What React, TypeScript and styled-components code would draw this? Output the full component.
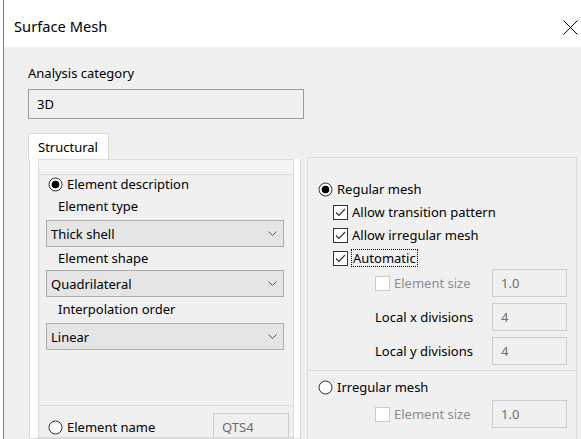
import React from 'react';
import styled, { createGlobalStyle } from 'styled-components';

const GlobalStyle = createGlobalStyle`
  html, body {
    margin: 0;
    padding: 0;
    background: #ffffff;
  }
  body {
    font-family: 'Noto Sans', 'Open Sans', sans-serif;
    font-size: 13px;
    color: #000;
  }
`;

const Window = styled.div`
  width: 577px;
  height: 439px;
  margin-left: 3px;
  border-left: 1px solid #7d7d7d;
  background: #f0f0f0;
  display: flex;
  flex-direction: column;
  overflow: hidden;
`;

const TitleBar = styled.div`
  height: 47px;
  flex-shrink: 0;
  background: #ffffff;
  display: flex;
  align-items: flex-start;
  justify-content: space-between;
  padding: 0 3px 0 10px;
`;

const Title = styled.span`
  font-size: 14.7px;
  line-height: 20px;
  margin-top: 16px;
`;

const CloseButton = styled.button`
  width: 15px;
  height: 15px;
  padding: 0;
  margin-top: 20px;
  border: none;
  background: none;
  display: flex;
`;

const Body = styled.div`
  flex: 1;
  min-height: 0;
  padding: 18px 0 0 24px;
  display: flex;
  flex-direction: column;
`;

const Caption = styled.div`
  line-height: 16px;
`;

const ReadonlyBox = styled.div`
  width: 276px;
  height: 30px;
  box-sizing: border-box;
  margin-top: 8px;
  border: 1px solid #9a9a9a;
  padding-left: 8px;
  display: flex;
  align-items: center;
`;

const Panes = styled.div`
  flex: 1;
  min-height: 0;
  margin-top: 14px;
  display: flex;
  align-items: flex-start;
`;

const TabControl = styled.div`
  width: 273px;
  height: 100%;
  display: flex;
  flex-direction: column;
`;

const TabHeader = styled.div`
  width: 81px;
  height: 26px;
  flex-shrink: 0;
  box-sizing: border-box;
  background: #ffffff;
  border: 1px solid #d9d9d9;
  border-bottom: none;
  padding: 0 0 0 9px;
  display: flex;
  align-items: center;
`;

const TabPage = styled.div`
  flex: 1;
  min-height: 0;
  margin-left: 1px;
  background: #ffffff;
  border: 1px solid #dadada;
  border-top: none;
  padding: 0 6px 0 8px;
  display: flex;
`;

const InnerPanel = styled.div`
  flex: 1;
  background: #f0f0f0;
  border: 1px solid #dcdcdc;
  display: flex;
  flex-direction: column;
  overflow: hidden;
`;

const PanelTop = styled.div`
  height: 14px;
  flex-shrink: 0;
  background: #f3f3f3;
  border-bottom: 1px solid #dcdcdc;
`;

const DescGroup = styled.div`
  height: 230px;
  flex-shrink: 0;
  border-bottom: 1px solid #dcdcdc;
  padding: 0 0 0 9px;
  display: flex;
  flex-direction: column;
`;

const OptionRow = styled.label<{ $indent?: number; $top?: number; $disabled?: boolean }>`
  display: flex;
  align-items: center;
  gap: 4px;
  height: 16px;
  line-height: 16px;
  flex-shrink: 0;
  margin-left: ${p => p.$indent ?? 0}px;
  margin-top: ${p => p.$top ?? 0}px;
  color: ${p => (p.$disabled ? '#8d8d8d' : '#000')};
  white-space: nowrap;
`;

const FocusText = styled.span`
  outline: 1px dotted #000;
  outline-offset: 0;
  padding: 0 1px;
`;

const SubLabel = styled.div<{ $top: number; $bottom: number }>`
  line-height: 16px;
  margin: ${p => p.$top}px 0 ${p => p.$bottom}px 10px;
`;

const Combo = styled.div`
  width: 238px;
  height: 27px;
  flex-shrink: 0;
  box-sizing: border-box;
  margin-left: -2px;
  background: #e5e5e5;
  border: 1px solid #adadad;
  padding: 0 6px 0 4px;
  display: flex;
  align-items: center;
  justify-content: space-between;
`;

const NameRow = styled.div`
  flex-shrink: 0;
  display: flex;
  align-items: flex-start;
  justify-content: space-between;
  padding: 7px 4px 0 9px;
`;

const ValueBox = styled.div<{ $width: number }>`
  width: ${p => p.$width}px;
  height: 28px;
  flex-shrink: 0;
  box-sizing: border-box;
  border: 1px solid #cccccc;
  color: #6d6d6d;
  padding-left: 8px;
  display: flex;
  align-items: center;
`;

const MeshGroup = styled.div`
  width: 270px;
  height: 300px;
  box-sizing: border-box;
  margin: 24px 0 0 6px;
  border: 1px solid #dcdcdc;
  display: flex;
  flex-direction: column;
`;

const RegularSection = styled.div`
  padding: 23px 0 5px;
  border-bottom: 1px solid #dcdcdc;
  display: flex;
  flex-direction: column;
`;

const IrregularSection = styled.div`
  padding: 8px 0 0;
  display: flex;
  flex-direction: column;
`;

const ValueRow = styled.div<{ $top: number }>`
  display: grid;
  grid-template-columns: 117px 75px;
  align-items: center;
  margin: ${p => p.$top}px 0 0 67px;
`;

const Radio: React.FC<{ checked?: boolean }> = ({ checked }) => (
  <svg width="15" height="15" viewBox="0 0 15 15">
    <circle cx="7.5" cy="7.5" r="6.5" fill="#fff" stroke="#333" strokeWidth="1" />
    {checked && <circle cx="7.5" cy="7.5" r="3.8" fill="#000" />}
  </svg>
);

const Check: React.FC<{ checked?: boolean; disabled?: boolean }> = ({ checked, disabled }) => (
  <svg width="15" height="15" viewBox="0 0 15 15">
    <rect x="0.5" y="0.5" width="14" height="14" fill="#fff" stroke={disabled ? '#cccccc' : '#333'} />
    {checked && (
      <polyline points="3,7.5 6,10.5 12,4" fill="none" stroke="#333" strokeWidth="1.2" />
    )}
  </svg>
);

const Chevron = () => (
  <svg width="9" height="5" viewBox="0 0 9 5">
    <polyline points="0.5,0.5 4.5,4.5 8.5,0.5" fill="none" stroke="#555" strokeWidth="1" />
  </svg>
);

const App: React.FC = () => {
  const fields = [
    { label: 'Element type', value: 'Thick shell', top: 6, bottom: 6 },
    { label: 'Element shape', value: 'Quadrilateral', top: 3, bottom: 4 },
    { label: 'Interpolation order', value: 'Linear', top: 4, bottom: 6 },
  ];

  return (
    <>
      <GlobalStyle />
      <Window>
        <TitleBar>
          <Title>Surface Mesh</Title>
          <CloseButton aria-label="Close">
            <svg width="15" height="15" viewBox="0 0 15 15">
              <path d="M0.5 0.5 L14.5 14.5 M14.5 0.5 L0.5 14.5" stroke="#000" strokeWidth="1" />
            </svg>
          </CloseButton>
        </TitleBar>

        <Body>
          <Caption>Analysis category</Caption>
          <ReadonlyBox>3D</ReadonlyBox>

          <Panes>
            <TabControl>
              <TabHeader>Structural</TabHeader>
              <TabPage>
                <InnerPanel>
                  <PanelTop />
                  <DescGroup>
                    <OptionRow $top={1}>
                      <Radio checked />
                      Element description
                    </OptionRow>
                    {fields.map(f => (
                      <React.Fragment key={f.label}>
                        <SubLabel $top={f.top} $bottom={f.bottom}>{f.label}</SubLabel>
                        <Combo>
                          {f.value}
                          <Chevron />
                        </Combo>
                      </React.Fragment>
                    ))}
                  </DescGroup>
                  <NameRow>
                    <OptionRow $top={6}>
                      <Radio />
                      Element name
                    </OptionRow>
                    <ValueBox $width={76}>QTS4</ValueBox>
                  </NameRow>
                </InnerPanel>
              </TabPage>
            </TabControl>

            <MeshGroup>
              <RegularSection>
                <OptionRow $indent={10}>
                  <Radio checked />
                  Regular mesh
                </OptionRow>
                <OptionRow $indent={25} $top={7}>
                  <Check checked />
                  Allow transition pattern
                </OptionRow>
                <OptionRow $indent={25} $top={7}>
                  <Check checked />
                  Allow irregular mesh
                </OptionRow>
                <OptionRow $indent={25} $top={7}>
                  <Check checked />
                  <FocusText>Automatic</FocusText>
                </OptionRow>
                <ValueRow $top={3}>
                  <OptionRow $disabled>
                    <Check disabled />
                    Element size
                  </OptionRow>
                  <ValueBox $width={75}>1.0</ValueBox>
                </ValueRow>
                <ValueRow $top={6}>
                  <span>Local x divisions</span>
                  <ValueBox $width={75}>4</ValueBox>
                </ValueRow>
                <ValueRow $top={6}>
                  <span>Local y divisions</span>
                  <ValueBox $width={75}>4</ValueBox>
                </ValueRow>
              </RegularSection>
              <IrregularSection>
                <OptionRow $indent={10}>
                  <Radio />
                  Irregular mesh
                </OptionRow>
                <ValueRow $top={5}>
                  <OptionRow $disabled>
                    <Check disabled />
                    Element size
                  </OptionRow>
                  <ValueBox $width={75}>1.0</ValueBox>
                </ValueRow>
              </IrregularSection>
            </MeshGroup>
          </Panes>
        </Body>
      </Window>
    </>
  );
};

export default App;
